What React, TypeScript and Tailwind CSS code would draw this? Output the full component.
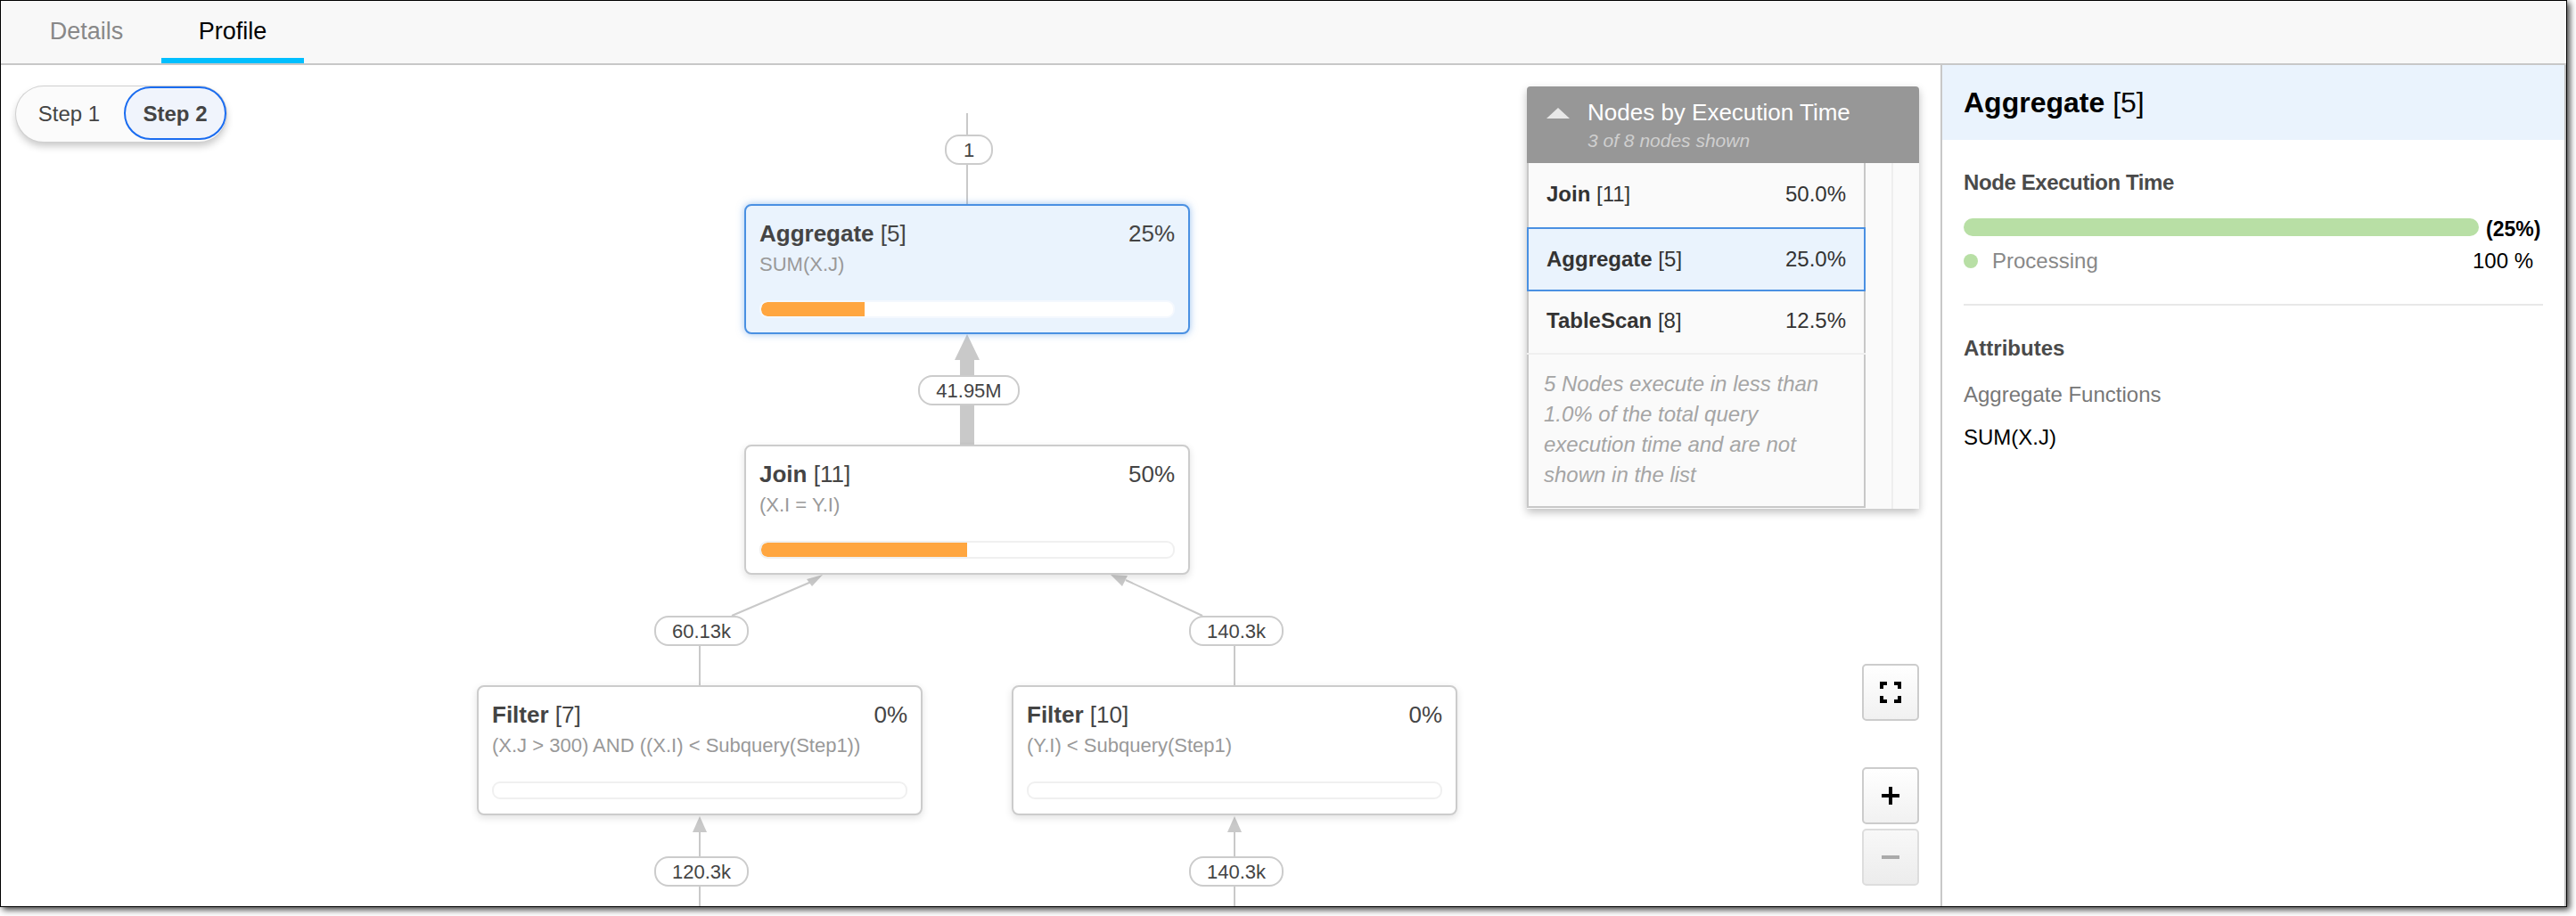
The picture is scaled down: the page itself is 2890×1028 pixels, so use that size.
const sans = "font-['Liberation_Sans',Arial,sans-serif]";

type NodeProps = {
  name: string;
  id: string;
  detail: string;
  pct: number;
  left: string;
  top: string;
  selected?: boolean;
};

// positions on the graph canvas are kept as full class names so tailwind sees them
function PlanNode({ name, id, detail, pct, left, top, selected }: NodeProps) {
  return (
    <div
      className={`absolute ${left} ${top} flex h-[146px] w-[500px] flex-col rounded-[8px] border-2 px-[15px] ${
        selected
          ? "border-[#4a90e2] bg-[#eaf3fd] shadow-[0_0_9px_rgba(74,144,226,0.55)]"
          : "border-[#cccccc] bg-white shadow-[0_3px_8px_rgba(0,0,0,0.12)]"
      }`}
    >
      <div className="mt-[15px] flex h-[32px] items-center justify-between text-[26px] text-[#444]">
        <span>
          <b>{name}</b> [{id}]
        </span>
        <span>{pct}%</span>
      </div>
      <div className="mt-[3px] h-[32px] text-[22px] leading-[32px] text-[#999]">{detail}</div>
      <div
        className={`mt-[24px] h-[20px] overflow-hidden rounded-[9px] border-2 bg-white ${
          selected ? "border-[#f4f8fe]" : "border-[#f0f0f0]"
        }`}
      >
        <div className="h-full rounded-l-[7px] bg-[#ffa640]" style={{ width: `${pct}%` }} />
      </div>
    </div>
  );
}

function EdgeLabel({ text, left, top, width }: { text: string; left: string; top: string; width: string }) {
  return (
    <div
      className={`absolute ${left} ${top} ${width} flex h-[34px] items-center justify-center rounded-[16px] border-2 border-[#cccccc] bg-white text-[22px] text-[#444]`}
    >
      {text}
    </div>
  );
}

function Edges() {
  const c = "#c9c9c9";
  return (
    <svg className="absolute left-0 top-0" width="2177" height="945" viewBox="1 73 2177 945">
      <g stroke={c} strokeWidth="2" fill="none">
        <path d="M1085 127V230" />
        <path d="M785 725V770M785 934V1018" />
        <path d="M1385 725V770M1385 934V1018" />
        <path d="M821 691L910 653" />
        <path d="M1349 691L1263 651" />
      </g>
      <g fill={c}>
        <path d="M1077 403H1093V499H1077Z" />
        <path d="M1085 375L1099 404H1071Z" />
        <path d="M785 916L793 934H777Z" />
        <path d="M1385 916L1393 934H1377Z" />
        <path d="M923 645L911 658L905 650Z" />
        <path d="M1246 645L1259 658L1265 646Z" />
      </g>
    </svg>
  );
}

function TimePanel() {
  const rows = [
    { name: "Join", id: "11", pct: "50.0%", h: "h-[72px]" },
    { name: "Aggregate", id: "5", pct: "25.0%", h: "h-[72px]", selected: true },
    { name: "TableScan", id: "8", pct: "12.5%", h: "h-[71px]", last: true },
  ];
  return (
    <div className="absolute left-[1712px] top-[24px] w-[440px] rounded-t-[4px] bg-[#fafafa] shadow-[0_4px_10px_rgba(0,0,0,0.25)]">
      <div className="flex h-[86px] rounded-t-[4px] bg-[#979797]">
        <svg className="ml-[22px] mt-[24px]" width="26" height="12" viewBox="0 0 26 12">
          <path d="M13 0L26 12H0Z" fill="#e8e8e8" />
        </svg>
        <div className="ml-[20px]">
          <div className="mt-[14px] h-[30px] text-[26px] leading-[30px] text-white">Nodes by Execution Time</div>
          <div className="mt-[5px] text-[21px] italic leading-[24px] text-[#cfcfcf]">3 of 8 nodes shown</div>
        </div>
      </div>
      <div className="flex h-[388px]">
        <div className="h-[387px] w-[380px] border-b-2 border-l-2 border-r-2 border-[#c8c8c8]">
          {rows.map((r) => (
            <div
              key={r.name}
              className={`-mx-[2px] flex items-center justify-between text-[24px] text-[#333] ${r.h} ${
                r.selected ? "border-2 border-[#4a90e2] bg-[#eaf3fd] px-[20px]" : "px-[22px] pb-[3px]"
              } ${r.last ? "border-b-2 border-[#f0f0f0]" : ""}`}
            >
              <span>
                <b>{r.name}</b> [{r.id}]
              </span>
              <span>{r.pct}</span>
            </div>
          ))}
          <p className="pl-[17px] pt-[16px] text-[24px] italic leading-[34px] text-[#a5a5a5]">
            5 Nodes execute in less than
            <br />
            1.0% of the total query
            <br />
            execution time and are not
            <br />
            shown in the list
          </p>
        </div>
        <div className="ml-[29px] w-[2px] bg-[#eeeeee]" />
      </div>
    </div>
  );
}

function MapButton({ disabled, children }: { disabled?: boolean; children: React.ReactNode }) {
  return (
    <div
      className={`flex size-[64px] items-center justify-center rounded-[5px] border-2 bg-gradient-to-b ${
        disabled ? "border-[#dddddd] from-[#f8f8f8] to-[#ececec]" : "border-[#cccccc] from-white to-[#f1f1f1]"
      }`}
    >
      {children}
    </div>
  );
}

function Controls() {
  return (
    <div className="absolute left-[2088px] top-[672px] flex flex-col">
      <MapButton>
        <svg width="24" height="24" viewBox="0 0 24 24" fill="#000">
          <path d="M0 0H8V4H4V8H0ZM16 0H24V8H20V4H16ZM0 16H4V20H8V24H0ZM20 16H24V24H16V20H20Z" />
        </svg>
      </MapButton>
      <div className="mt-[52px]">
        <MapButton>
          <svg width="20" height="20" viewBox="0 0 20 20" fill="#000">
            <path d="M8 0H12V8H20V12H12V20H8V12H0V8H8Z" />
          </svg>
        </MapButton>
      </div>
      <div className="mt-[5px]">
        <MapButton disabled>
          <div className="h-[4px] w-[20px] bg-[#aaaaaa]" />
        </MapButton>
      </div>
    </div>
  );
}

function StepSwitch() {
  return (
    <div className="absolute left-[17px] top-[24px] flex h-[62px] w-[236px] rounded-[31px] bg-[#fbfbfb] shadow-[0_0_0_1px_#d0d0d0,0_5px_9px_rgba(0,0,0,0.22)]">
      <div className="flex h-[60px] w-[121px] items-center justify-center pr-[2px] pt-[2px] text-[24px] text-[#444]">Step 1</div>
      <div className="flex h-[60px] w-[115px] items-center justify-center rounded-[30px] border-2 border-[#1a6cf0] bg-[#f0f4fc] pt-[2px] text-[24px] font-bold text-[#444]">
        Step 2
      </div>
    </div>
  );
}

function DetailPanel() {
  return (
    <aside className="flex h-full w-[702px] flex-col border-x-2 border-l-[#c8c8c8] border-r-[#bbbbbb] bg-white">
      <div className="flex h-[84px] items-center bg-[#eaf3fd] pl-[24px] text-[32px] text-black">
        <span>
          <b>Aggregate</b> [5]
        </span>
      </div>
      <div className="pl-[24px] pr-[24px]">
        <h3 className="mt-[34px] text-[24px] font-bold leading-[28px] tracking-[-0.4px] text-[#4a4a4a]">Node Execution Time</h3>
        <div className="mt-[24px] flex h-[24px] items-center">
          <div className="h-[20px] w-[578px] rounded-[10px] bg-[#b8dfa5]" />
          <span className="ml-[8px] pt-[4px] text-[23px] font-bold text-black">(25%)</span>
        </div>
        <div className="mt-[12px] flex h-[28px] items-center text-[24px]">
          <span className="size-[16px] rounded-full bg-[#b8dfa5]" />
          <span className="ml-[16px] text-[#888]">Processing</span>
          <span className="ml-auto mr-[11px] text-black">100 %</span>
        </div>
        <div className="mt-[34px] h-[2px] bg-[#e8e8e8]" />
        <h3 className="mt-[34px] text-[24px] font-bold leading-[28px] text-[#4a4a4a]">Attributes</h3>
        <div className="mt-[24px] text-[24px] leading-[28px] text-[#777]">Aggregate Functions</div>
        <div className="mt-[20px] text-[24px] leading-[28px] text-black">SUM(X.J)</div>
      </div>
    </aside>
  );
}

export default function App() {
  return (
    <div className={`${sans} h-[1028px] w-[2890px] overflow-hidden bg-white`}>
      <div className="flex h-[1018px] w-[2880px] flex-col border border-black bg-white shadow-[3px_3px_7px_rgba(0,0,0,0.75)]">
        <div className="flex h-[72px] shrink-0 items-end border-b-2 border-[#c8c8c8] bg-[#f8f8f8]">
          <div className="flex h-[70px] w-[180px] items-center justify-center pb-[1px] pl-[12px] text-[27px] text-[#888]">Details</div>
          <div className="flex h-[70px] w-[160px] items-center justify-center border-b-[6px] border-[#00bfff] pt-[5px] text-[27px] text-black">
            Profile
          </div>
        </div>
        <div className="flex min-h-0 flex-1">
          <div className="relative min-w-0 flex-1 overflow-hidden">
            <Edges />
            <StepSwitch />
            <PlanNode name="Aggregate" id="5" detail="SUM(X.J)" pct={25} left="left-[834px]" top="top-[156px]" selected />
            <PlanNode name="Join" id="11" detail="(X.I = Y.I)" pct={50} left="left-[834px]" top="top-[426px]" />
            <PlanNode name="Filter" id="7" detail="(X.J > 300) AND ((X.I) < Subquery(Step1))" pct={0} left="left-[534px]" top="top-[696px]" />
            <PlanNode name="Filter" id="10" detail="(Y.I) < Subquery(Step1)" pct={0} left="left-[1134px]" top="top-[696px]" />
            <EdgeLabel text="1" left="left-[1059px]" top="top-[78px]" width="w-[54px]" />
            <EdgeLabel text="41.95M" left="left-[1029px]" top="top-[348px]" width="w-[114px]" />
            <EdgeLabel text="60.13k" left="left-[733px]" top="top-[618px]" width="w-[106px]" />
            <EdgeLabel text="140.3k" left="left-[1333px]" top="top-[618px]" width="w-[106px]" />
            <EdgeLabel text="120.3k" left="left-[733px]" top="top-[888px]" width="w-[106px]" />
            <EdgeLabel text="140.3k" left="left-[1333px]" top="top-[888px]" width="w-[106px]" />
            <TimePanel />
            <Controls />
          </div>
          <DetailPanel />
        </div>
      </div>
    </div>
  );
}
